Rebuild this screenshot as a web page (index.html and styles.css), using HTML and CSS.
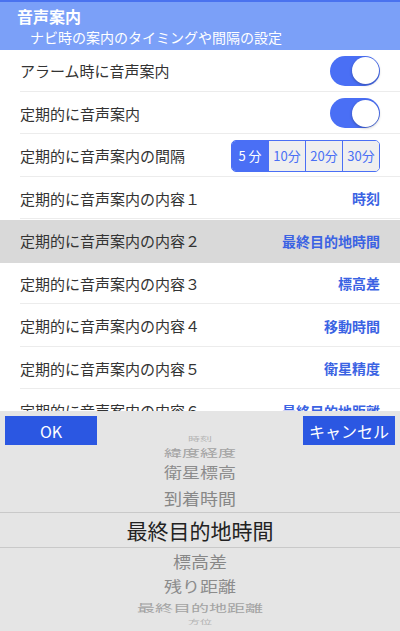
FILE: index.html
```html
<!DOCTYPE html>
<html lang="ja">
<head>
  <title>音声案内</title>
  <meta charset="UTF-8">
  <meta name="viewport" content="width=device-width, initial-scale=1">

  <link rel="stylesheet" href="styles.css">
</head>
<body>

  <div class="screen">
    <header class="header">
      <h1>音声案内</h1>
      <p>ナビ時の案内のタイミングや間隔の設定</p>
    </header>

    <div class="list-area">
      <ul class="settings">
        <li>
          <span class="label">アラーム時に音声案内</span>
          <span class="toggle on"><span class="knob"></span></span>
        </li>
        <li>
          <span class="label">定期的に音声案内</span>
          <span class="toggle on"><span class="knob"></span></span>
        </li>
        <li>
          <span class="label">定期的に音声案内の間隔</span>
          <span class="segments">
            <span class="seg active">5&nbsp;分</span>
            <span class="seg">10分</span>
            <span class="seg">20分</span>
            <span class="seg">30分</span>
          </span>
        </li>
        <li>
          <span class="label">定期的に音声案内の内容１</span>
          <span class="value">時刻</span>
        </li>
        <li class="selected">
          <span class="label">定期的に音声案内の内容２</span>
          <span class="value">最終目的地時間</span>
        </li>
        <li>
          <span class="label">定期的に音声案内の内容３</span>
          <span class="value">標高差</span>
        </li>
        <li>
          <span class="label">定期的に音声案内の内容４</span>
          <span class="value">移動時間</span>
        </li>
        <li>
          <span class="label">定期的に音声案内の内容５</span>
          <span class="value">衛星精度</span>
        </li>
        <li>
          <span class="label">定期的に音声案内の内容６</span>
          <span class="value">最終目的地距離</span>
        </li>
      </ul>
    </div>

    <div class="sheet">
      <button class="btn btn-ok">OK</button>
      <button class="btn btn-cancel">キャンセル</button>

      <div class="wheel">
        <div class="item far2"><span>時刻</span></div>
        <div class="item far1"><span>緯度経度</span></div>
        <div class="item near2"><span>衛星標高</span></div>
        <div class="item near1"><span>到着時間</span></div>
        <div class="item current"><span>最終目的地時間</span></div>
        <div class="item near1 below"><span>標高差</span></div>
        <div class="item near2 below"><span>残り距離</span></div>
        <div class="item far1"><span>最終目的地距離</span></div>
        <div class="item far2"><span>方位</span></div>
      </div>
    </div>
  </div>

</body>
</html>
```

FILE: styles.css
```css
* {
  box-sizing: border-box;
}

body {
  margin: 0;
  font-family: "Noto Sans CJK JP", "Noto Sans", sans-serif;
  background-color: #fff;
}

.screen {
  width: 400px;
  height: 631px;
  display: flex;
  flex-direction: column;
  overflow: hidden;
}

/* header bar */
.header {
  flex: none;
  height: 50px;
  border-top: 2px solid #4a72ef;
  background-color: #7ba0f8;
  color: #fff;
  padding: 2px 0 0 17px;
}

.header h1 {
  margin: 0;
  font-size: 16px;
  line-height: 24px;
  font-weight: bold;
}

.header p {
  margin: 0;
  padding-left: 13px;
  font-size: 14px;
  line-height: 18px;
}

/* settings list, cut off by the picker sheet */
.list-area {
  flex: 1;
  min-height: 0;
  overflow: hidden;
}

.settings {
  list-style: none;
  margin: 0;
  padding: 0;
}

.settings li {
  height: 42.5px;
  display: flex;
  align-items: center;
  justify-content: space-between;
  padding: 0 20px;
  border-bottom: 1px solid transparent;
  background-image: linear-gradient(#ececec, #ececec);
  background-size: calc(100% - 20px) 1px;
  background-position: right bottom;
  background-repeat: no-repeat;
}

.settings li.selected {
  background-color: #d9d9d9;
  background-image: none;
}

.label {
  font-size: 15px;
  color: #333;
}

.value {
  font-size: 14px;
  font-weight: bold;
  color: #3b63e3;
}

.toggle {
  width: 50px;
  height: 30px;
  border-radius: 15px;
  background-color: #4a6ff5;
  display: flex;
  align-items: center;
  justify-content: flex-end;
  padding: 0 1.5px;
}

.toggle .knob {
  width: 27px;
  height: 27px;
  border-radius: 50%;
  background-color: #fff;
  box-shadow: 0 1px 3px rgba(0, 0, 0, 0.3);
}

.segments {
  display: flex;
  height: 32px;
  border: 1px solid #4a6ff5;
  border-radius: 5px;
  overflow: hidden;
}

.seg {
  width: 37px;
  display: flex;
  align-items: center;
  justify-content: center;
  font-size: 13px;
  color: #4a6ff5;
  background-color: #efefef;
  border-left: 1px solid #4a6ff5;
}

.seg:first-child {
  border-left: none;
  width: 36px;
}

.seg.active {
  background-color: #4a6ff5;
  color: #fff;
}

/* picker sheet */
.sheet {
  flex: none;
  position: relative;
  height: 220px;
  background-color: #e5e5e5;
  padding-top: 21px;
}

.btn {
  position: absolute;
  top: 5px;
  width: 92px;
  height: 29px;
  border: none;
  background-color: #2b57e2;
  color: #fff;
  font-family: "Noto Sans CJK JP", "Noto Sans", sans-serif;
  font-size: 16px;
  padding: 0;
  z-index: 1;
}

.btn-ok {
  left: 5px;
}

.btn-cancel {
  right: 5px;
}

.wheel {
  display: flex;
  flex-direction: column;
}

.item {
  display: flex;
  align-items: center;
  justify-content: center;
  color: #888;
  font-size: 18px;
  line-height: 1;
}

.item span {
  display: block;
}

.item.far2 {
  height: 11px;
  color: #b5b5b5;
}

.item.far2 span {
  font-size: 12px;
  transform: scaleY(0.5);
}

.item.far1 {
  height: 17px;
  color: #a3a3a3;
}

.item.far1 span {
  transform: scaleY(0.6);
}

.item.near2 {
  height: 24px;
  color: #8c8c8c;
}

.item.near2 span {
  transform: scaleY(0.8);
}

.item.near1 {
  height: 28px;
  color: #888;
}

.item.near1 span {
  transform: scaleY(0.9);
}

.item.near1.below {
  height: 26px;
}

.item.current {
  height: 36px;
  border-top: 1px solid #c9c9c9;
  border-bottom: 1px solid #c9c9c9;
  color: #222;
  font-size: 21px;
}
```
